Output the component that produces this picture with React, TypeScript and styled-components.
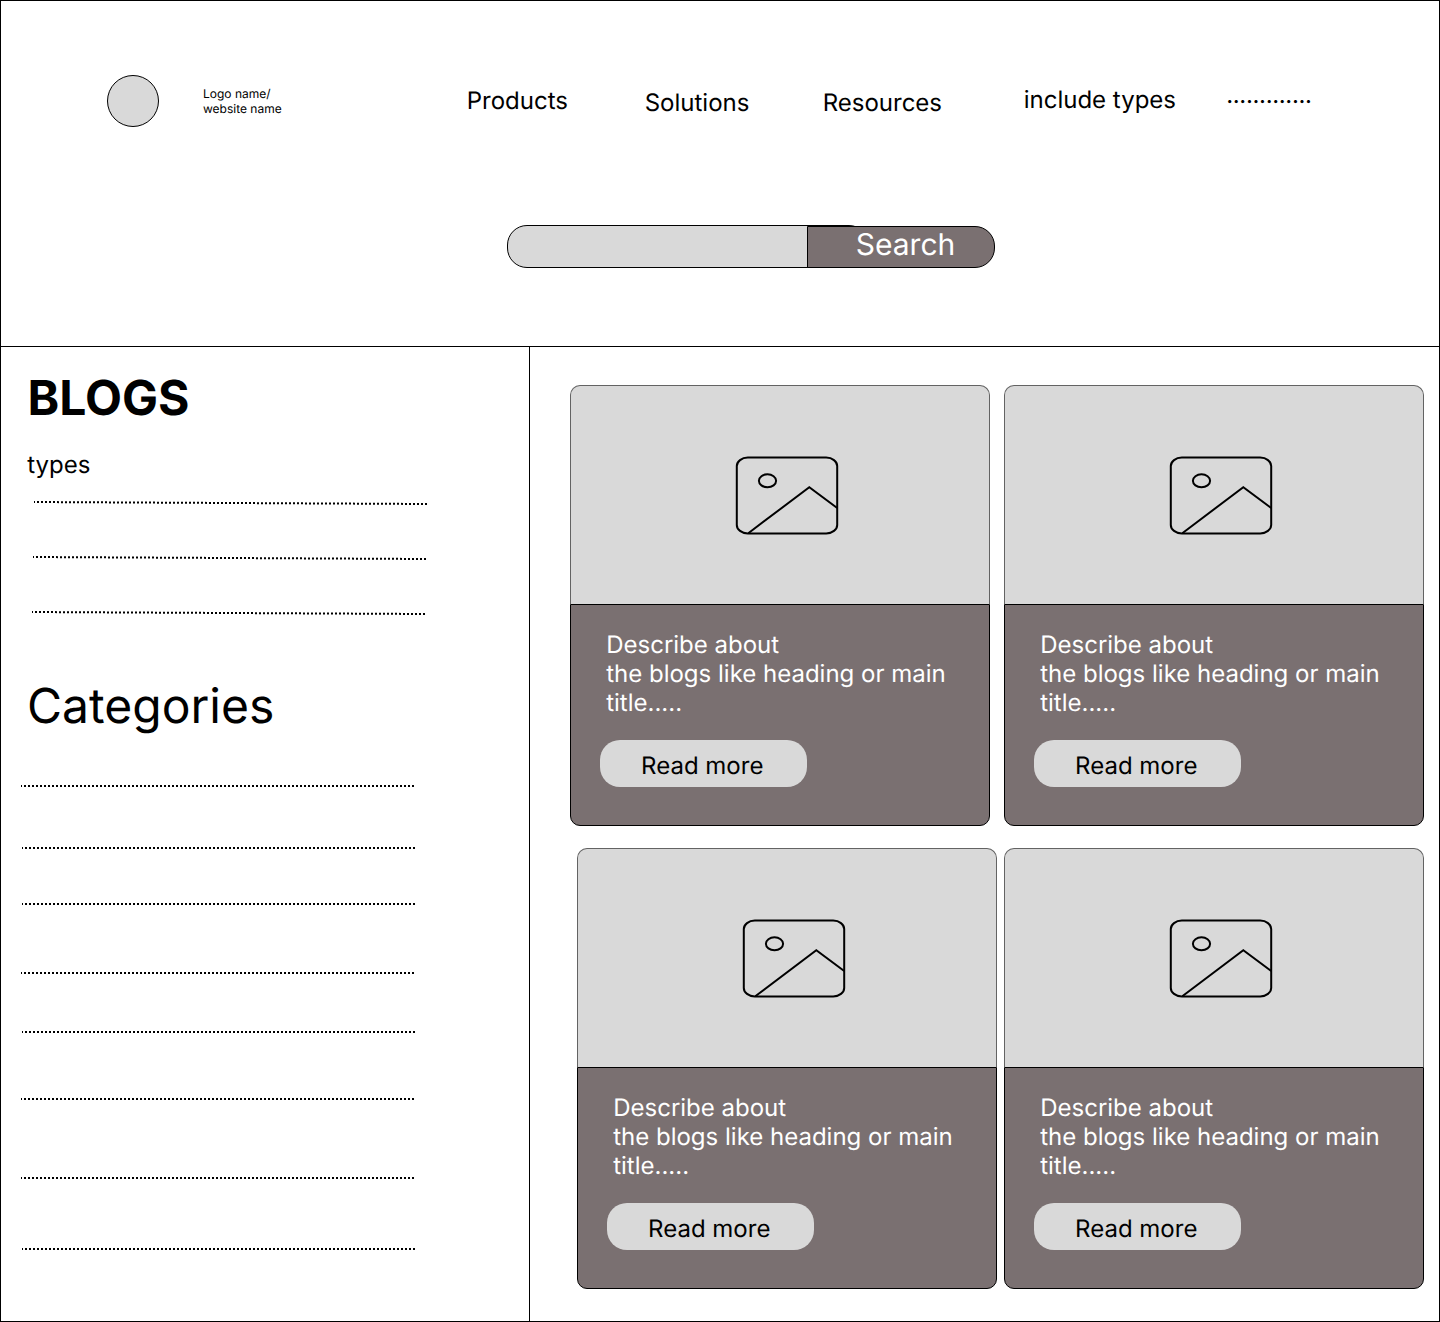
import React from "react";
import styled, { createGlobalStyle } from "styled-components";

const GlobalStyle = createGlobalStyle`
  *, *::before, *::after { box-sizing: border-box; }
  body {
    margin: 0;
    background: #fff;
    color: #000;
    font-family: Inter, "Liberation Sans", sans-serif;
    text-rendering: geometricPrecision;
  }
`;

const Page = styled.div`
  display: flex;
  flex-direction: column;
  width: 1440px;
  height: 1322px;
  border: 1px solid #000;
  overflow: hidden;
`;

const Header = styled.header`
  height: 346px;
  flex: none;
  border-bottom: 1px solid #000;
  padding: 74px 0 0 106px;
`;

const TopBar = styled.div`
  display: flex;
  align-items: flex-start;
  height: 52px;
`;

const Logo = styled.div`
  width: 52px;
  height: 52px;
  border: 1px solid #000;
  border-radius: 50%;
  background: #d9d9d9;
`;

const LogoName = styled.div`
  width: 87px;
  margin: 11px 0 0 44px;
  font-size: 12px;
  line-height: 15px;
  white-space: nowrap;
`;

const Nav = styled.nav`
  display: flex;
  align-items: flex-start;
  margin-left: 176.7px;
`;

const NavLink = styled.a<{ $width: number; $drop: number; $tracking?: number }>`
  width: ${(p) => p.$width}px;
  margin-top: ${(p) => p.$drop}px;
  font-size: 24px;
  line-height: 29px;
  letter-spacing: ${(p) => p.$tracking ?? 0}px;
  white-space: nowrap;
`;

const SearchBar = styled.form`
  display: flex;
  align-items: flex-end;
  margin: 98px 0 0 400px;
`;

const SearchField = styled.input`
  width: 362px;
  height: 43px;
  padding: 0 20px;
  border: 1px solid #000;
  border-radius: 20px;
  background: #d9d9d9;
  outline: none;
  font: inherit;
`;

const SearchButton = styled.button`
  z-index: 1;
  width: 188px;
  height: 42px;
  margin: 0 0 0 -62px;
  padding: 0 0 5px 9px;
  border: 1px solid #000;
  border-radius: 0 20px 20px 0;
  background: #7a7071;
  color: #fff;
  font: 400 30px/36px Inter, "Liberation Sans", sans-serif;
  text-rendering: inherit;
`;

const Main = styled.div`
  display: flex;
  flex: 1;
  min-height: 0;
`;

const Sidebar = styled.aside`
  width: 529px;
  flex: none;
  border-right: 1px solid #000;
  padding-top: 22px;
`;

const Title = styled.h1`
  margin: 0 0 0 26.5px;
  font-size: 48px;
  line-height: 58px;
  font-weight: 700;
`;

const Label = styled.p`
  margin: 23px 0 0 26.2px;
  font-size: 24px;
  line-height: 29px;
`;

const SectionTitle = styled.h2`
  margin: 62px 0 0 26px;
  font-size: 48px;
  line-height: 58px;
  font-weight: 400;
`;

const Rule = styled.svg<{ $gap: number; $inset: number }>`
  display: block;
  width: 393px;
  margin: ${(p) => p.$gap}px 0 0 ${(p) => p.$inset}px;
  stroke: #000;
  stroke-width: 2;
  stroke-dasharray: 2 2;
`;

const Blogs = styled.main`
  display: flex;
  flex-direction: column;
  flex: 1;
  gap: 22px;
  padding: 38px 15px 0 0;
`;

const CardRow = styled.div<{ $gap: number }>`
  display: flex;
  justify-content: flex-end;
  gap: ${(p) => p.$gap}px;
`;

const Card = styled.article`
  width: 420px;
  height: 441px;
`;

const Thumb = styled.div`
  display: flex;
  height: 219px;
  padding: 70px 0 0 164px;
  border: 1px solid #636363;
  border-bottom: 0;
  border-radius: 10px 10px 0 0;
  background: #d9d9d9;
`;

const CardBody = styled.div`
  height: 222px;
  padding: 25px 0 0 29px;
  border: 1px solid #000;
  border-radius: 0 0 10px 10px;
  background: #7a7071;
`;

const Summary = styled.p`
  width: 352px;
  margin: 0 0 23px 6.2px;
  color: #fff;
  font-size: 24px;
  line-height: 29px;
`;

const ReadMore = styled.button`
  display: block;
  width: 207px;
  height: 47px;
  padding: 4px 2.5px 0 0;
  border: 0;
  border-radius: 20px;
  background: #d9d9d9;
  color: #000;
  font: 400 24px/29px Inter, "Liberation Sans", sans-serif;
  text-rendering: inherit;
`;

const links = [
  { text: "Products", width: 178, drop: 11 },
  { text: "Solutions", width: 178, drop: 13 },
  { text: "Resources", width: 201, drop: 13 },
  { text: "include types", width: 202.5, drop: 10 },
  { text: ".............", width: 90, drop: 5, tracking: -0.34 },
];

const typeRules = [
  { gap: 22, inset: 33 },
  { gap: 51, inset: 32 },
  { gap: 51, inset: 31 },
];

const categoryRules = [
  { gap: 50, inset: 20 },
  { gap: 60, inset: 21 },
  { gap: 54, inset: 21 },
  { gap: 67, inset: 20 },
  { gap: 57, inset: 21 },
  { gap: 65, inset: 20 },
  { gap: 77, inset: 20 },
  { gap: 69, inset: 21 },
];

const ImageIcon = () => (
  <svg width="105" height="80" viewBox="0 0 105 80" fill="none" stroke="#000" strokeWidth="2">
    <rect x="1.8" y="1.6" width="100.4" height="75.8" rx="11" ry="8.5" />
    <ellipse cx="32.5" cy="24.8" rx="8.6" ry="6.5" />
    <path d="M13.3 77.2 74.3 31.2 102.2 52" />
  </svg>
);

const BlogCard = () => (
  <Card>
    <Thumb>
      <ImageIcon />
    </Thumb>
    <CardBody>
      <Summary>
        Describe about
        <br />
        the blogs like heading or main title.....
      </Summary>
      <ReadMore>Read more</ReadMore>
    </CardBody>
  </Card>
);

export default function App() {
  return (
    <>
      <GlobalStyle />
      <Page>
        <Header>
          <TopBar>
            <Logo />
            <LogoName>
              Logo name/
              <br />
              website name
            </LogoName>
            <Nav>
              {links.map((l) => (
                <NavLink key={l.text} $width={l.width} $drop={l.drop} $tracking={l.tracking}>
                  {l.text}
                </NavLink>
              ))}
            </Nav>
          </TopBar>
          <SearchBar>
            <SearchField aria-label="Search" />
            <SearchButton type="button">Search</SearchButton>
          </SearchBar>
        </Header>
        <Main>
          <Sidebar>
            <Title>BLOGS</Title>
            <Label>types</Label>
            {typeRules.map((r, i) => (
              <Rule key={i} $gap={r.gap} $inset={r.inset} height="4" viewBox="0 0 393 4">
                <line x1="0" y1="1" x2="393" y2="3" strokeDashoffset="1" />
              </Rule>
            ))}
            <SectionTitle>Categories</SectionTitle>
            {categoryRules.map((r, i) => (
              <Rule key={i} $gap={r.gap} $inset={r.inset} height="2" viewBox="0 0 393 2">
                <line x1="0" y1="1" x2="393" y2="1" strokeDashoffset="1" />
              </Rule>
            ))}
          </Sidebar>
          <Blogs>
            <CardRow $gap={14}>
              <BlogCard />
              <BlogCard />
            </CardRow>
            <CardRow $gap={7}>
              <BlogCard />
              <BlogCard />
            </CardRow>
          </Blogs>
        </Main>
      </Page>
    </>
  );
}
